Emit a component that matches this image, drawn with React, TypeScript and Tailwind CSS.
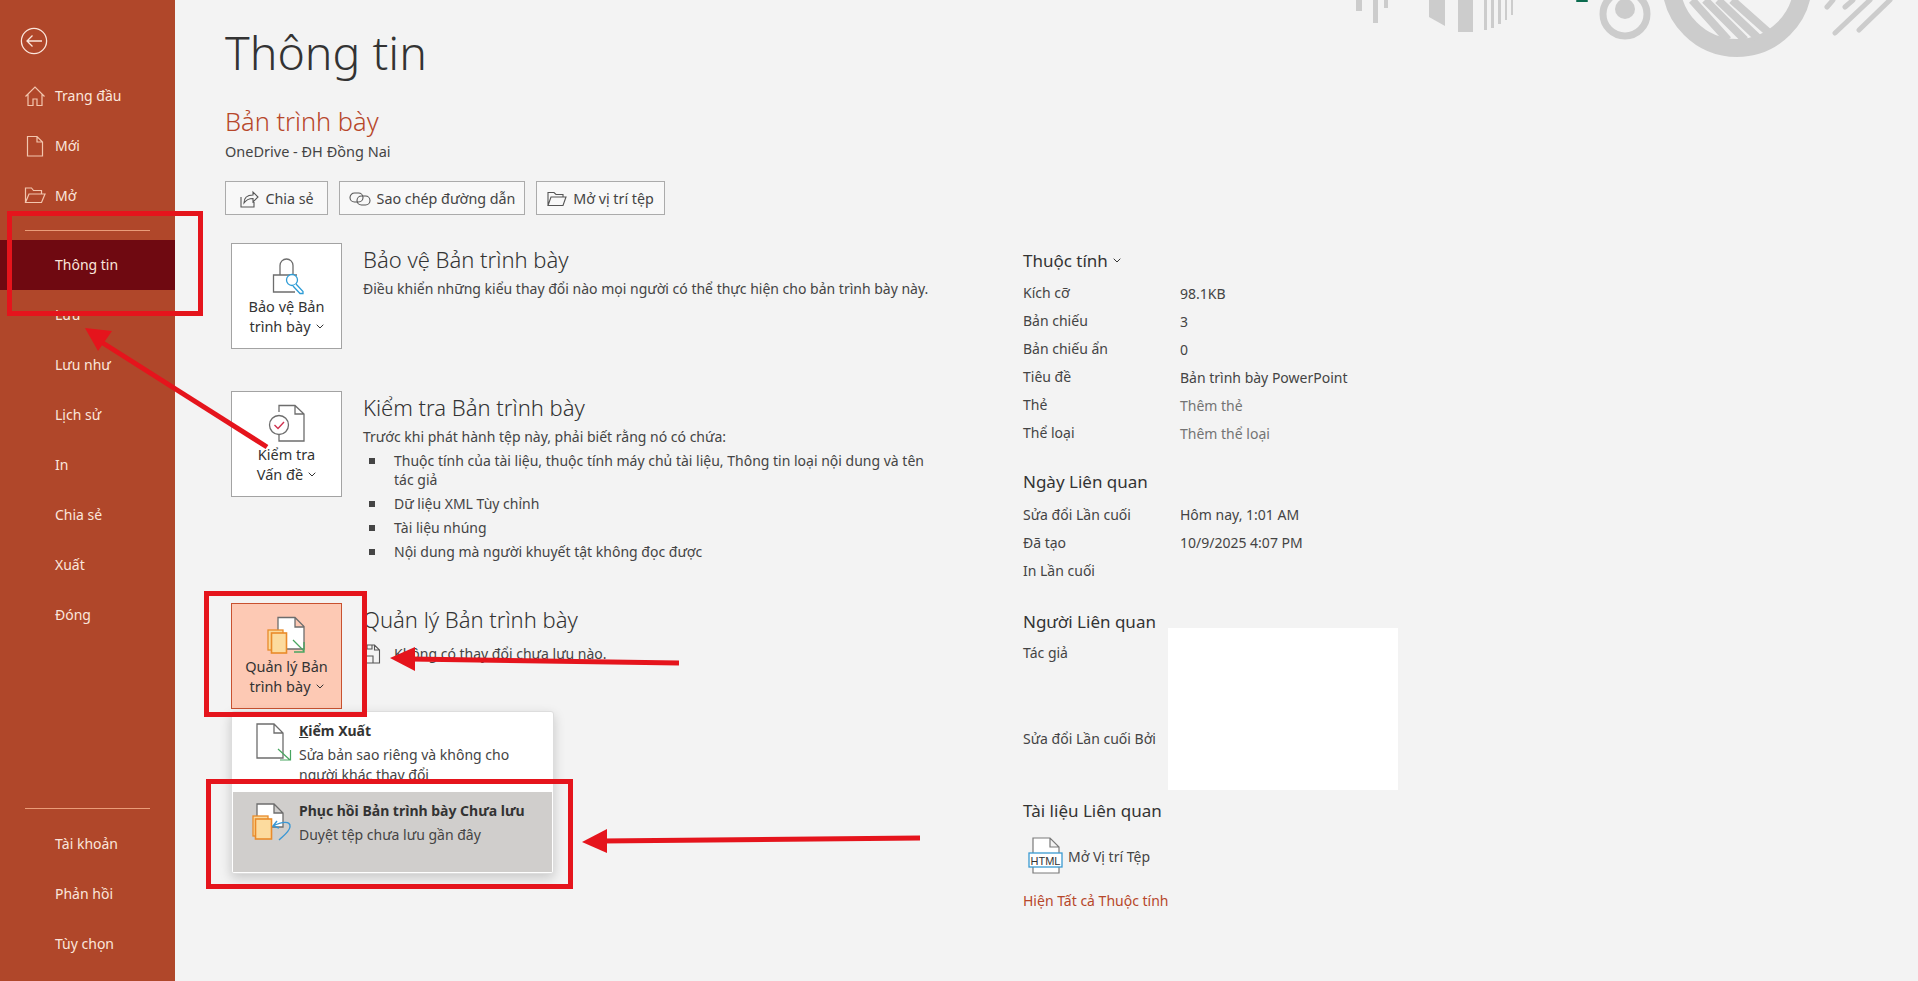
import type { ReactNode } from 'react';

const Chevron = () => (
  <svg viewBox="0 0 8 5" className="inline-block w-[8px] h-[5px] ml-[5px] mb-[3px]" fill="none" stroke="currentColor" strokeWidth="1">
    <path d="M.7.7 4 4 7.3.7" />
  </svg>
);

const NavItem = ({ label, icon, active }: { label: string; icon?: ReactNode; active?: boolean }) => (
  <div className={`relative flex items-center h-[50px] pl-[55px] pb-[2px] text-[14px] text-[#fbe6dc] ${active ? 'bg-[#6f0911]' : ''}`}>
    {icon && <span className="absolute left-[24px] top-[14px] w-[22px] h-[22px]">{icon}</span>}
    {label}
  </div>
);

const Sidebar = () => (
  <aside className="flex flex-col shrink-0 w-[175px] h-full bg-[#b0472a]">
    <div className="h-[71px] pt-[27px] pl-[20px]">
      <svg viewBox="0 0 28 28" className="w-[28px] h-[28px]" fill="none" stroke="#fbe6dc" strokeWidth="1.3">
        <circle cx="14" cy="14" r="12.6" />
        <path d="M7 14h15M12.5 8.5 7 14l5.5 5.5" />
      </svg>
    </div>
    <NavItem
      label="Trang đầu"
      icon={
        <svg viewBox="0 0 22 22" className="w-full h-full" fill="none" stroke="#f3c6ae" strokeWidth="1.2">
          <path d="M1.5 11.5 11 2l9.5 9.5M4 9.5V20.5h5V14h4v6.5h5V9.5" />
        </svg>
      }
    />
    <NavItem
      label="Mới"
      icon={
        <svg viewBox="0 0 22 22" className="w-full h-full" fill="none" stroke="#f3c6ae" strokeWidth="1.2">
          <path d="M3.5 1.5H13L18.5 7v14h-15zM13 1.5V7h5.5" />
        </svg>
      }
    />
    <NavItem
      label="Mở"
      icon={
        <svg viewBox="0 0 22 22" className="w-full h-full" fill="none" stroke="#f3c6ae" strokeWidth="1.2">
          <path d="M1.5 17.5V3h6l2 2.5h8V9M1.5 17.5 5 9h16l-3.5 8.5z" />
        </svg>
      }
    />
    <div className="mx-[25px] mt-[9px] mb-[9px] h-px bg-[#ea9c78]" />
    <NavItem label="Thông tin" active />
    <NavItem label="Lưu" />
    <NavItem label="Lưu như" />
    <NavItem label="Lịch sử" />
    <NavItem label="In" />
    <NavItem label="Chia sẻ" />
    <NavItem label="Xuất" />
    <NavItem label="Đóng" />
    <div className="flex-1" />
    <div className="mx-[25px] mb-[10px] h-px bg-[#ea9c78]" />
    <NavItem label="Tài khoản" />
    <NavItem label="Phản hồi" />
    <NavItem label="Tùy chọn" />
    <div className="h-[12px]" />
  </aside>
);

const ActionButton = ({ icon, label, width }: { icon: ReactNode; label: string; width: string }) => (
  <div className={`flex items-center justify-center gap-[6px] h-[34px] pt-px border border-[#ababab] bg-[#f8f8f8] text-[14.3px] text-[#444444] ${width}`}>
    {icon}
    {label}
  </div>
);

const Tile = ({ icon, lines, active }: { icon: ReactNode; lines: [string, string]; active?: boolean }) => (
  <div
    className={`shrink-0 flex flex-col items-center w-[111px] h-[106px] border pt-[12px] text-[14.5px] leading-[19.5px] text-[#333333] ${
      active ? 'bg-[#fdc9b4] border-[#c8512f]' : 'bg-white border-[#a3a3a3]'
    }`}
  >
    <div className="w-[40px] h-[40px] mb-px">{icon}</div>
    <div className="whitespace-nowrap">{lines[0]}</div>
    <div className="whitespace-nowrap">
      {lines[1]}
      <Chevron />
    </div>
  </div>
);

const LockIcon = () => (
  <svg viewBox="0 0 40 40" className="w-full h-full" fill="none">
    <path d="M13 19V9.5a6.5 6.5 0 0 1 13 0V19" stroke="#6d6d6d" strokeWidth="1.3" />
    <path d="M28 36H6.5V19H30" stroke="#6d6d6d" strokeWidth="1.3" fill="#fff" />
    <circle cx="25" cy="24" r="5.5" stroke="#2e9cd6" strokeWidth="1.3" fill="#fff" />
    <path d="m29 28 7 7.5v2h-3L26 30" stroke="#2e9cd6" strokeWidth="1.3" fill="#fff" />
  </svg>
);

const InspectIcon = () => (
  <svg viewBox="0 0 40 40" className="w-full h-full" fill="none">
    <path d="M12 8V1.5h16l9 8.5V37H12v-7M28 1.5V10h9" stroke="#6d6d6d" strokeWidth="1.3" fill="#fff" />
    <circle cx="12" cy="21" r="9.5" stroke="#6d6d6d" strokeWidth="1.3" fill="#fff" />
    <path d="m7.5 21 3.5 3.5 6-6.5" stroke="#d0304f" strokeWidth="1.4" />
  </svg>
);

const ManageIcon = () => (
  <svg viewBox="0 0 40 40" className="w-full h-full" fill="none">
    <path d="M11 1.5h17l9 9V33H11zM28 1.5V11h9" stroke="#6d6d6d" strokeWidth="1.3" fill="#fff" />
    <rect x="1" y="14" width="15" height="20" stroke="#e98b2a" strokeWidth="1.3" fill="#fbd99b" />
    <rect x="4.5" y="17" width="15" height="20" stroke="#e98b2a" strokeWidth="1.6" fill="#fcdb9e" />
    <path d="m26 24 11 11M37 26v10H27" stroke="#48a560" strokeWidth="1.3" />
  </svg>
);

const Bullet = ({ children }: { children: ReactNode }) => (
  <li className="flex">
    <span className="shrink-0 mt-[7px] ml-[6px] mr-[19px] w-[6px] h-[6px] bg-[#444444]" />
    <span>{children}</span>
  </li>
);

const MenuItem = ({ icon, title, desc, hover }: { icon: ReactNode; title: ReactNode; desc: ReactNode; hover?: boolean }) => (
  <div className={`flex h-[80px] overflow-hidden ${hover ? 'bg-[#d0cecc]' : ''}`}>
    <div className="shrink-0 w-[66px] pl-[23px] pt-[11px]">{icon}</div>
    <div className="pt-[9px] text-[14px] leading-[20px] text-[#444444]">
      <div className="font-bold text-[#333333] mb-[4px]">{title}</div>
      {desc}
    </div>
  </div>
);

const ManageMenu = () => (
  <div className="absolute left-0 top-[108px] w-[323px] h-[163px] px-px bg-white border border-[#dddddd] rounded-[3px] shadow-[0_4px_12px_rgba(0,0,0,0.18)]">
    <MenuItem
      title={
        <>
          <span className="underline">K</span>iểm Xuất
        </>
      }
      desc={
        <>
          Sửa bản sao riêng và không cho
          <br />
          người khác thay đổi
        </>
      }
      icon={
        <svg viewBox="0 0 36 38" className="w-[36px] h-[38px]" fill="none">
          <path d="M1 1h17l9 9v25H1zM18 1v9h9" stroke="#6d6d6d" strokeWidth="1.3" fill="#fff" />
          <path d="m22 26 12 11M34.5 27v10H24" stroke="#48a560" strokeWidth="1.2" />
        </svg>
      }
    />
    <MenuItem
      hover
      title="Phục hồi Bản trình bày Chưa lưu"
      desc="Duyệt tệp chưa lưu gần đây"
      icon={
        <svg viewBox="0 0 40 38" className="-ml-[4px] w-[40px] h-[38px]" fill="none">
          <path d="M5 1h17l9 9v14H5zM22 1v9h9" stroke="#6d6d6d" strokeWidth="1.3" fill="#fff" />
          <rect x="1" y="13" width="15" height="20" stroke="#e98b2a" strokeWidth="1.3" fill="#fbd99b" />
          <rect x="3.5" y="16" width="16" height="20" stroke="#e98b2a" strokeWidth="1.6" fill="#fcdb9e" />
          <path d="m25 18-4 5 6 2M21 23c8-4 18-6 17 1-.8 5-7 9-11 13" stroke="#3a97d4" strokeWidth="1.4" />
        </svg>
      }
    />
  </div>
);

const PropRow = ({ label, value, muted, dated }: { label: string; value?: string; muted?: boolean; dated?: boolean }) => (
  <div className="flex items-center h-[28px] text-[14px] text-[#444444]">
    <span className="w-[157px] shrink-0">{label}</span>
    {value && <span className={`${dated ? '' : 'pt-[3px]'} ${muted ? 'text-[#737373]' : ''}`}>{value}</span>}
  </div>
);

const SectionHead = ({ children, className }: { children: ReactNode; className?: string }) => (
  <div className={`h-[28px] leading-[28px] text-[17px] text-[#333333] ${className ?? ''}`}>{children}</div>
);

const InfoPanel = () => (
  <div className="shrink-0 w-[380px] pt-[247px]">
    <SectionHead>
      Thuộc tính
      <Chevron />
    </SectionHead>
    <div className="mt-[3px]">
      <PropRow label="Kích cỡ" value="98.1KB" />
      <PropRow label="Bản chiếu" value="3" />
      <PropRow label="Bản chiếu ẩn" value="0" />
      <PropRow label="Tiêu đề" value="Bản trình bày PowerPoint" />
      <PropRow label="Thẻ" value="Thêm thẻ" muted />
      <PropRow label="Thể loại" value="Thêm thể loại" muted />
    </div>
    <SectionHead className="mt-[22px]">Ngày Liên quan</SectionHead>
    <div className="mt-[4px]">
      <PropRow dated label="Sửa đổi Lần cuối" value="Hôm nay, 1:01 AM" />
      <PropRow dated label="Đã tạo" value="10/9/2025 4:07 PM" />
      <PropRow dated label="In Lần cuối" />
    </div>
    <div className="relative mt-[24px] h-[189px]">
      <SectionHead>Người Liên quan</SectionHead>
      <div className="mt-[2px]">
        <PropRow label="Tác giả" />
      </div>
      <div className="mt-[58px]">
        <PropRow label="Sửa đổi Lần cuối Bởi" />
      </div>
      {/* che thông tin người dùng */}
      <div className="absolute left-[145px] top-[20px] w-[230px] h-[162px] bg-white" />
    </div>
    <SectionHead>Tài liệu Liên quan</SectionHead>
    <div className="flex items-center mt-[11px] ml-[5px] h-[40px] text-[14px] text-[#444444]">
      <svg viewBox="0 0 36 38" className="w-[36px] h-[38px] mr-[4px]" fill="none">
        <path d="M5 1h17l9 9v26H5zM22 1v9h9" stroke="#7a7a7a" strokeWidth="1.2" fill="#fff" />
        <rect x="1" y="16" width="33" height="14" stroke="#3b9ad2" strokeWidth="1.3" fill="#fff" />
        <text x="17.5" y="27.5" textAnchor="middle" fontSize="11" fill="#333" fontFamily="'Liberation Sans',sans-serif">
          HTML
        </text>
      </svg>
      Mở Vị trí Tệp
    </div>
    <div className="mt-[15px] text-[14px] leading-[20px] text-[#b7472a]">Hiện Tất cả Thuộc tính</div>
  </div>
);

const Decor = () => (
  <svg viewBox="0 0 618 80" className="absolute right-0 top-0 w-[618px] h-[80px]" fill="#cccccc">
    <rect x="56" y="0" width="6" height="11" />
    <rect x="73" y="0" width="5" height="23" />
    <rect x="84" y="0" width="4" height="8" />
    <path d="M129 0h16v26l-16-9z" />
    <rect x="158" y="0" width="15" height="32" />
    <rect x="184" y="0" width="3" height="30" />
    <rect x="191" y="0" width="3" height="28" />
    <rect x="198" y="0" width="3" height="24" />
    <rect x="205" y="0" width="2" height="20" />
    <rect x="211" y="0" width="2" height="15" />
    <rect x="276" y="0" width="12" height="2" rx="1" fill="#0b6b4f" />
    <circle cx="325" cy="14" r="22" fill="none" stroke="#cccccc" strokeWidth="7" />
    <circle cx="325" cy="9" r="10" />
    <circle cx="437" cy="-18" r="66" fill="none" stroke="#cccccc" strokeWidth="18" />
    <g stroke="#cccccc" strokeWidth="8">
      <path d="m392 0 36 40M405 0l40 40M418 0l40 38M432 0l36 32" />
    </g>
    <g stroke="#cccccc" strokeWidth="5" strokeLinecap="round">
      <path d="M535 33 570 0M559 30 590 0M527 7l6-7M545 7l8-7" />
    </g>
  </svg>
);

const Annotations = () => (
  <svg viewBox="0 0 1918 981" className="absolute inset-0 w-[1918px] h-[981px] pointer-events-none" fill="#e5141c">
    <g fill="none" stroke="#e5141c" strokeWidth="5">
      <rect x="9.5" y="213.5" width="191" height="100" />
      <rect x="206.5" y="593.5" width="158" height="121" />
      <rect x="208.5" y="781.5" width="362" height="105" />
    </g>
    <path d="M267 447 95 338" stroke="#e5141c" strokeWidth="5" fill="none" />
    <path d="m85 328 27 3-14 20z" />
    <path d="M679 663 410 659" stroke="#e5141c" strokeWidth="5" fill="none" />
    <path d="m390 658 25-11v24z" />
    <path d="M920 838 602 841" stroke="#e5141c" strokeWidth="5" fill="none" />
    <path d="m582 842 25-13v24z" />
  </svg>
);

export default function App() {
  return (
    <div className="relative flex w-[1918px] h-[981px] overflow-hidden bg-[#f3f3f3] font-['Noto_Sans',sans-serif]">
      <Sidebar />
      <main className="flex flex-1">
        <div className="shrink-0 w-[848px] pl-[50px]">
          <h1 className="mt-[22px] h-[60px] leading-[60px] text-[46.5px] font-light text-[#333333]">Thông tin</h1>
          <div className="mt-[23px] h-[32px] leading-[32px] text-[25.4px] font-light text-[#b7472a]">Bản trình bày</div>
          <div className="mt-[4px] h-[20px] leading-[20px] text-[14.5px] text-[#444444]">OneDrive - ĐH Đồng Nai</div>
          <div className="flex gap-[11px] mt-[20px]">
            <ActionButton
              width="w-[103px]"
              label="Chia sẻ"
              icon={
                <svg viewBox="0 0 20 20" className="w-[20px] h-[20px]" fill="none" stroke="#555555" strokeWidth="1.1">
                  <path d="M2 8v10h13v-5M5 14c0-5 3-8 9-8V3l5 5-5 5V9.5c-4 0-7 1.5-9 4.5z" />
                </svg>
              }
            />
            <ActionButton
              width="w-[186px]"
              label="Sao chép đường dẫn"
              icon={
                <svg viewBox="0 0 22 16" className="w-[22px] h-[16px]" fill="none" stroke="#555555" strokeWidth="1.1">
                  <rect x="1" y="2" width="13" height="9" rx="4.5" />
                  <rect x="8" y="5" width="13" height="9" rx="4.5" />
                </svg>
              }
            />
            <ActionButton
              width="w-[129px]"
              label="Mở vị trí tệp"
              icon={
                <svg viewBox="0 0 20 16" className="w-[20px] h-[16px]" fill="none" stroke="#555555" strokeWidth="1.1">
                  <path d="M1 14.5V1.5h6l2 2h7V6M1 14.5 4 6h15l-3 8.5z" />
                </svg>
              }
            />
          </div>

          <section className="flex gap-[21px] mt-[28px] ml-[6px]">
            <Tile icon={<LockIcon />} lines={['Bảo vệ Bản', 'trình bày']} />
            <div className="pt-[2px]">
              <h2 className="h-[28px] leading-[28px] text-[22px] font-light text-[#333333]">Bảo vệ Bản trình bày</h2>
              <p className="mt-[6px] leading-[20px] text-[14px] text-[#444444]">
                Điều khiển những kiểu thay đổi nào mọi người có thể thực hiện cho bản trình bày này.
              </p>
            </div>
          </section>

          <section className="flex gap-[21px] mt-[42px] ml-[6px] h-[169px]">
            <Tile icon={<InspectIcon />} lines={['Kiểm tra', 'Vấn đề']} />
            <div className="pt-[2px] w-[580px] text-[14px] leading-[19.5px] text-[#444444]">
              <h2 className="h-[28px] leading-[28px] text-[22px] font-light text-[#333333]">Kiểm tra Bản trình bày</h2>
              <p className="mt-[6px]">Trước khi phát hành tệp này, phải biết rằng nó có chứa:</p>
              <ul className="flex flex-col gap-[4.5px] mt-[4px]">
                <Bullet>Thuộc tính của tài liệu, thuộc tính máy chủ tài liệu, Thông tin loại nội dung và tên tác giả</Bullet>
                <Bullet>Dữ liệu XML Tùy chỉnh</Bullet>
                <Bullet>Tài liệu nhúng</Bullet>
                <Bullet>Nội dung mà người khuyết tật không đọc được</Bullet>
              </ul>
            </div>
          </section>

          <section className="relative flex gap-[21px] mt-[43px] ml-[6px]">
            <Tile active icon={<ManageIcon />} lines={['Quản lý Bản', 'trình bày']} />
            <div className="pt-[2px] text-[14px] text-[#444444]">
              <h2 className="h-[28px] leading-[28px] text-[22px] font-light text-[#333333]">Quản lý Bản trình bày</h2>
              <div className="flex items-center gap-[13px] mt-[11px] leading-[20px]">
                <svg viewBox="0 0 18 20" className="w-[18px] h-[20px]" fill="none" stroke="#555555" strokeWidth="1.1">
                  <path d="M1.5 1h10l5 5v13h-15zM11.5 1v5h5M3 19v-7h7v7M4 1v4h5V1" />
                </svg>
                Không có thay đổi chưa lưu nào.
              </div>
            </div>
            <ManageMenu />
          </section>
        </div>
        <InfoPanel />
      </main>
      <Decor />
      <Annotations />
    </div>
  );
}
